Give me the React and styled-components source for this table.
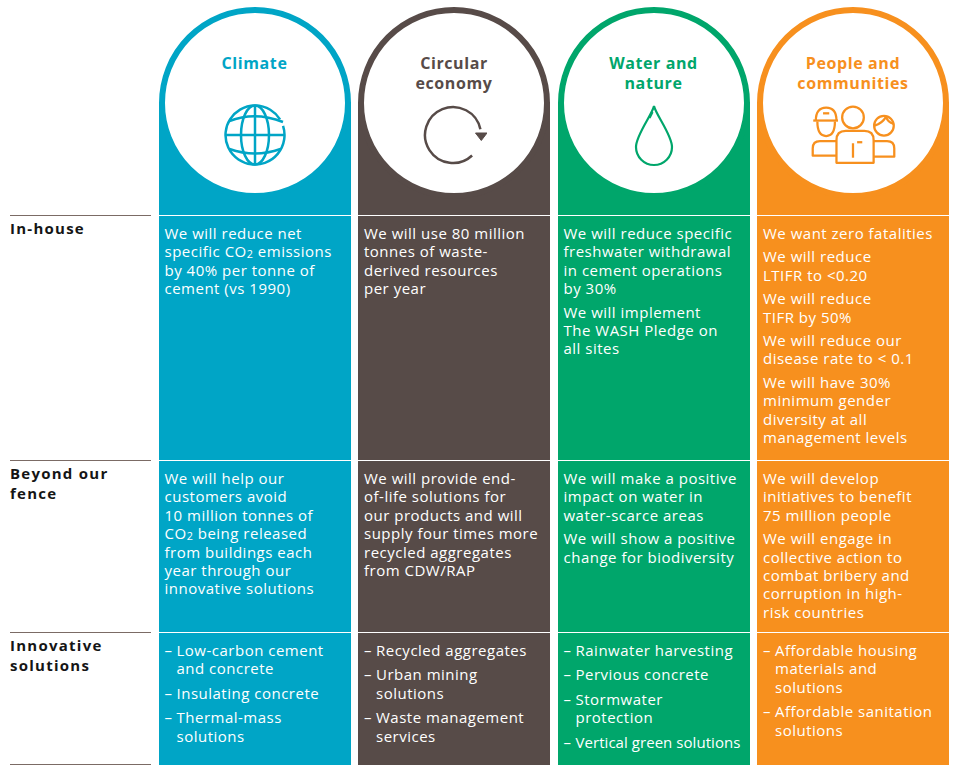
import React from "react";
import styled, { createGlobalStyle } from "styled-components";

const GlobalStyle = createGlobalStyle`
  body {
    margin: 0;
    background: #ffffff;
    font-family: "Open Sans", "Noto Sans", sans-serif;
  }
`;

const colors = {
  climate: "#00a5c6",
  circular: "#574b48",
  water: "#00a66b",
  people: "#f7901e",
  rule: "#7b6b65",
};

const Page = styled.div`
  display: grid;
  grid-template-columns: 141px repeat(4, 192px);
  grid-template-rows: 208px 245px 172px 133px;
  column-gap: 7.5px;
  padding: 7px 0 0 10px;
`;

const Corner = styled.div``;

const Header = styled.div`
  display: flex;
  justify-content: center;
  align-items: flex-start;
  background: linear-gradient(to bottom, transparent 95px, ${(p) => p.$color} 95px);
`;

const Circle = styled.div`
  width: 192px;
  height: 192px;
  box-sizing: border-box;
  border: 6px solid ${(p) => p.$color};
  border-radius: 50%;
  background: #ffffff;
  display: flex;
  flex-direction: column;
  align-items: center;
  padding-top: 40px;
`;

const Title = styled.div`
  height: 40px;
  color: ${(p) => p.$color};
  font-size: 16px;
  font-weight: 700;
  line-height: 20px;
  letter-spacing: 0.6px;
  text-align: center;
`;

const IconWrap = styled.div`
  margin-top: 10px;
  height: 64px;
  display: flex;
  align-items: center;
  justify-content: center;
  color: ${(p) => p.$color};
`;

const RowLabel = styled.div`
  border-top: 1.5px solid ${colors.rule};
  border-bottom: ${(p) => (p.$last ? `1.5px solid ${colors.rule}` : "none")};
  padding-top: 2px;
  color: #151515;
  font-size: 15px;
  font-weight: 700;
  line-height: 20px;
  letter-spacing: 1.25px;
`;

const Cell = styled.div`
  background: ${(p) => p.$color};
  border-top: 1px solid #ffffff;
  padding: 8px 2px 0 6px;
  color: #ffffff;
  font-size: 15px;
  line-height: 18.4px;
  letter-spacing: 0.5px;
  white-space: nowrap;
`;

const Para = styled.p`
  margin: 0 0 5px;
`;

const List = styled.ul`
  list-style: none;
  margin: 0;
  padding: 0;
`;

const Item = styled.li`
  position: relative;
  padding-left: 12px;
  margin-bottom: 6px;
  letter-spacing: ${(p) => (p.$tight ? "0.05px" : "inherit")};

  &::before {
    content: "–";
    position: absolute;
    left: 0;
    top: 0;
  }
`;

const Sub = styled.sub`
  font-size: 0.72em;
  vertical-align: -0.12em;
  line-height: 0;
`;

const Globe = () => (
  <svg width="64" height="64" viewBox="0 0 64 64" fill="none" stroke="currentColor" strokeWidth="2.5">
    <path d="M60.06 22.88 A29.5 29.5 0 1 1 57.02 16.37" />
    <ellipse cx="32" cy="32" rx="14" ry="29.5" />
    <path d="M32 2.5 V61.5" />
    <path d="M2.5 32 H61.5" />
    <path d="M6.5 18 Q32 8 60 19" />
    <path d="M6.5 46 Q32 55 57.5 46" />
  </svg>
);

const Cycle = () => (
  <svg width="66" height="64" viewBox="0 0 66 64" fill="none" stroke="currentColor" strokeWidth="2.5">
    <path d="M51.1 52.5 A28 28 0 1 1 59.4 26.2" />
    <path d="M54.5 30 L66 30 L60.3 37.5 Z" fill="currentColor" strokeWidth="1" />
  </svg>
);

const Drop = () => (
  <svg width="64" height="64" viewBox="0 0 64 64" fill="none" stroke="currentColor" strokeWidth="2.2">
    <path d="M32 3 C30 12 14 32 14 44 A18 18 0 0 0 50 44 C50 32 34 12 32 3 Z" />
    <path d="M30.5 9 L27.5 15" />
  </svg>
);

const People = () => (
  <svg width="99" height="64" viewBox="5 5 95 62" fill="none" stroke="currentColor" strokeWidth="2.2" strokeLinejoin="round">
    <path d="M36 42 H20 Q13 42 13 49 V56 H36" />
    <path d="M72 42 H85 Q92 42 92 49 V57 H72" />
    <path d="M13.5 22 H37.5" />
    <path d="M16 22 Q16 9.5 26 9.5 Q36 9.5 36 22" />
    <path d="M23 15 H29" />
    <path d="M17.5 23 Q17.5 37 26 37 Q34.5 37 34.5 23" />
    <circle cx="82" cy="27" r="9.5" />
    <path d="M73 27 Q80 25 84 18.5 Q86 24 91 25" />
    <circle cx="52" cy="19" r="10.5" fill="#ffffff" />
    <path d="M36 63 V41 Q36 32 45 32 H63 Q72 32 72 41 V63 Z" fill="#ffffff" />
    <path d="M52 44 V58" />
    <path d="M56 43 H61" />
  </svg>
);

const lines = (arr) =>
  arr.map((l, i) => (
    <React.Fragment key={i}>
      {i > 0 && <br />}
      {l}
    </React.Fragment>
  ));

const CO2 = () => (
  <>
    CO<Sub>2</Sub>
  </>
);

const columns = [
  {
    key: "climate",
    color: colors.climate,
    title: ["Climate"],
    icon: <Globe />,
    inHouse: [
      [
        "We will reduce net",
        <>specific <CO2 /> emissions</>,
        "by 40% per tonne of",
        "cement (vs 1990)",
      ],
    ],
    beyond: [
      [
        "We will help our",
        "customers avoid",
        "10 million tonnes of",
        <><CO2 /> being released</>,
        "from buildings each",
        "year through our",
        "innovative solutions",
      ],
    ],
    solutions: [["Low-carbon cement", "and concrete"], ["Insulating concrete"], ["Thermal-mass", "solutions"]],
  },
  {
    key: "circular",
    color: colors.circular,
    title: ["Circular", "economy"],
    icon: <Cycle />,
    inHouse: [["We will use 80 million", "tonnes of waste-", "derived resources", "per year"]],
    beyond: [
      [
        "We will provide end-",
        "of-life solutions for",
        "our products and will",
        "supply four times more",
        "recycled aggregates",
        "from CDW/RAP",
      ],
    ],
    solutions: [["Recycled aggregates"], ["Urban mining", "solutions"], ["Waste management", "services"]],
  },
  {
    key: "water",
    color: colors.water,
    title: ["Water and", "nature"],
    icon: <Drop />,
    inHouse: [
      ["We will reduce specific", "freshwater withdrawal", "in cement operations", "by 30%"],
      ["We will implement", "The WASH Pledge on", "all sites"],
    ],
    beyond: [
      ["We will make a positive", "impact on water in", "water-scarce areas"],
      ["We will show a positive", "change for biodiversity"],
    ],
    solutions: [
      ["Rainwater harvesting"],
      ["Pervious concrete"],
      ["Stormwater", "protection"],
      { tight: true, text: ["Vertical green solutions"] },
    ],
  },
  {
    key: "people",
    color: colors.people,
    title: ["People and", "communities"],
    icon: <People />,
    inHouse: [
      ["We want zero fatalities"],
      ["We will reduce", "LTIFR to <0.20"],
      ["We will reduce", "TIFR by 50%"],
      ["We will reduce our", "disease rate to < 0.1"],
      ["We will have 30%", "minimum gender", "diversity at all", "management levels"],
    ],
    beyond: [
      ["We will develop", "initiatives to benefit", "75 million people"],
      ["We will engage in", "collective action to", "combat bribery and", "corruption in high-", "risk countries"],
    ],
    solutions: [["Affordable housing", "materials and", "solutions"], ["Affordable sanitation", "solutions"]],
  },
];

export default function App() {
  return (
    <>
      <GlobalStyle />
      <Page>
        <Corner />
        {columns.map((c) => (
          <Header key={c.key} $color={c.color}>
            <Circle $color={c.color}>
              <Title $color={c.color}>{lines(c.title)}</Title>
              <IconWrap $color={c.color}>{c.icon}</IconWrap>
            </Circle>
          </Header>
        ))}

        <RowLabel>In-house</RowLabel>
        {columns.map((c) => (
          <Cell key={c.key} $color={c.color}>
            {c.inHouse.map((p, i) => (
              <Para key={i}>{lines(p)}</Para>
            ))}
          </Cell>
        ))}

        <RowLabel>
          Beyond our
          <br />
          fence
        </RowLabel>
        {columns.map((c) => (
          <Cell key={c.key} $color={c.color}>
            {c.beyond.map((p, i) => (
              <Para key={i}>{lines(p)}</Para>
            ))}
          </Cell>
        ))}

        <RowLabel $last>
          Innovative
          <br />
          solutions
        </RowLabel>
        {columns.map((c) => (
          <Cell key={c.key} $color={c.color}>
            <List>
              {c.solutions.map((s, i) =>
                Array.isArray(s) ? (
                  <Item key={i}>{lines(s)}</Item>
                ) : (
                  <Item key={i} $tight={s.tight}>
                    {lines(s.text)}
                  </Item>
                )
              )}
            </List>
          </Cell>
        ))}
      </Page>
    </>
  );
}
